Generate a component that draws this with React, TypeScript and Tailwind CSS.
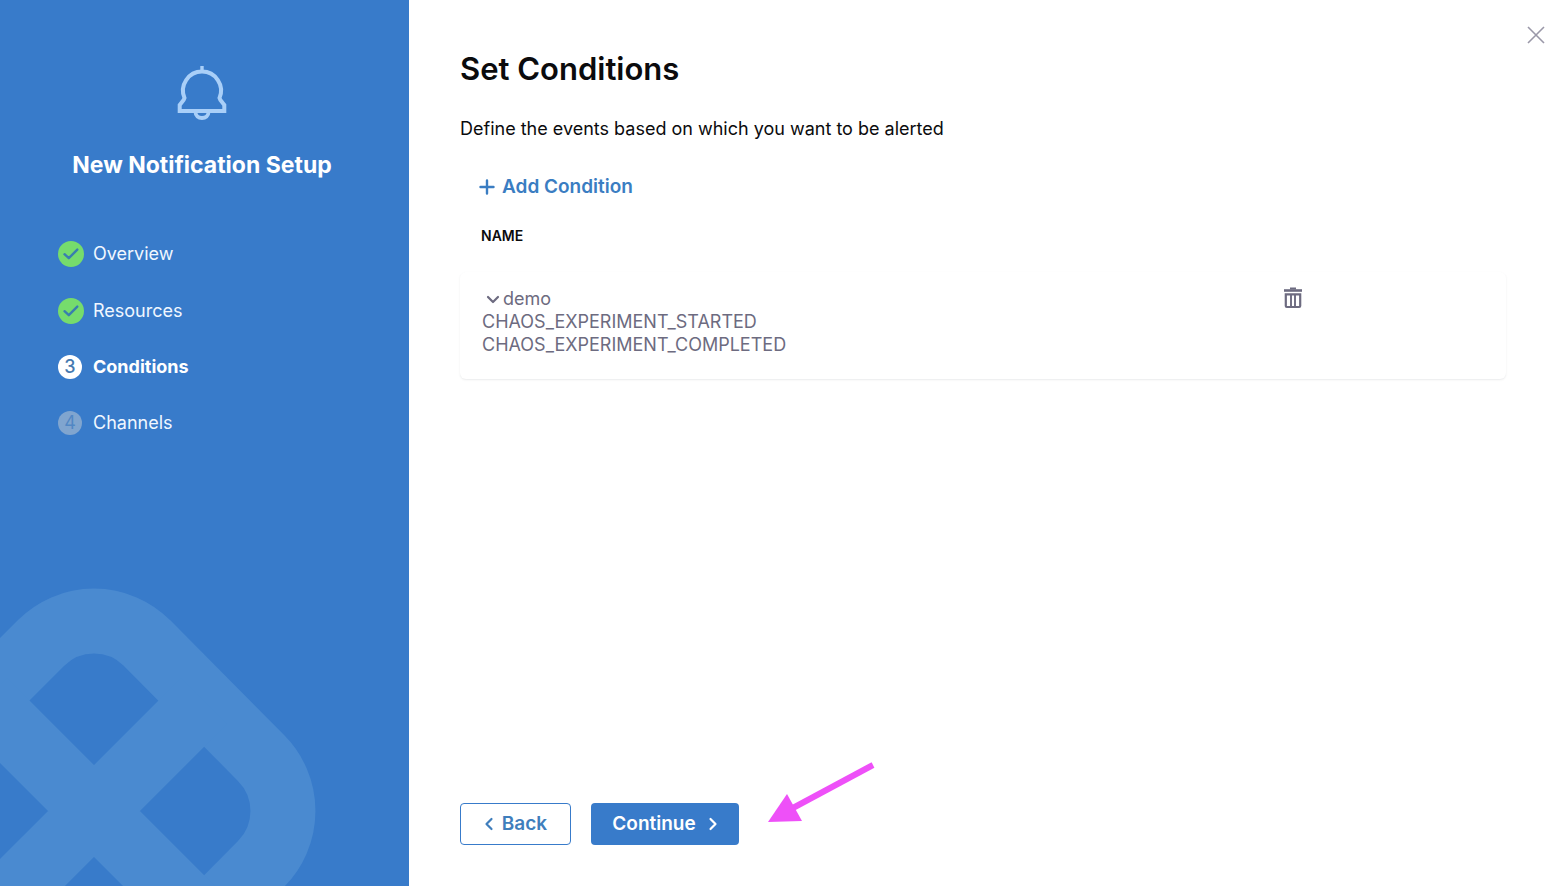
import React from "react";

type Step = { label: string; state: "done" | "current" | "pending" };

const steps: Step[] = [
  { label: "Overview", state: "done" },
  { label: "Resources", state: "done" },
  { label: "Conditions", state: "current" },
  { label: "Channels", state: "pending" },
];

const events = ["CHAOS_EXPERIMENT_STARTED", "CHAOS_EXPERIMENT_COMPLETED"];

const rowStyles = {
  done: "flex h-[29px] items-center gap-[9px] text-lg text-[#f0f7ff]",
  current: "flex h-7 items-center gap-[9px] text-lg font-bold",
  pending: "flex h-7 items-center gap-[9px] text-lg text-[#f0f7ff]",
};

function BellIcon() {
  return (
    <svg width="52" height="56" viewBox="0 0 52 56" fill="none" stroke="#a9cff8" strokeWidth="4" aria-hidden="true">
      <path d="M26 1v6" strokeWidth="3.4" />
      <path d="M8.500 33A19 19 0 1 1 43.500 33Q44 35 46 37L48.300 40V46H3.700V40L6 37Q8 35 8.500 33Z" strokeLinejoin="miter" />
      <path d="M19.500 47c0 4 3 6 6.500 6s6.500-2 6.500-6" strokeWidth="3.800" />
    </svg>
  );
}

function KnotMark() {
  return (
    <svg
      className="pointer-events-none absolute bottom-0 left-0"
      width="318"
      height="300"
      viewBox="0 586 318 300"
      fill="none"
      stroke="#4a8ad0"
      strokeWidth="65"
      aria-hidden="true"
    >
      <path d="M147 643L261 758A75 75 0 0 1 261 864L147 979A75 75 0 0 1 41 979L-74 864A75 75 0 0 1 -74 758L41 643A75 75 0 0 1 147 643Z" />
      <path d="M-16 701L204 921M204 701L-16 921" />
    </svg>
  );
}

function StepBadge({ step, index }: { step: Step; index: number }) {
  if (step.state === "done") {
    return (
      <svg width="26" height="26" viewBox="0 0 26 26" fill="none" aria-hidden="true">
        <circle cx="13" cy="13" r="13" fill="#76dc6c" />
        <path d="M6.500 13.200l4.300 4 8.500-8.600" stroke="#397eaf" strokeWidth="2.400" strokeLinecap="round" strokeLinejoin="round" />
      </svg>
    );
  }
  if (step.state === "current") {
    return (
      <span className="flex size-6 items-center justify-center rounded-full bg-white text-lg leading-6 font-medium text-[#467ab0]">
        {index}
      </span>
    );
  }
  return (
    <span className="flex size-6 items-center justify-center rounded-full bg-[#80a5cf] text-lg leading-6 text-[#5187c4]">
      {index}
    </span>
  );
}

function TrashIcon() {
  return (
    <svg width="20" height="22" viewBox="0 0 20 22" fill="none" stroke="#6d6b80" aria-hidden="true">
      <path d="M7 1.500h6" strokeWidth="2" />
      <path d="M1 3.500h18" strokeWidth="2.600" />
      <path d="M2.800 7.300h14.400V19a1 1 0 0 1-1 1H3.800a1 1 0 0 1-1-1Z" strokeWidth="2.200" />
      <path d="M8 8v11M12 8v11" strokeWidth="1.900" />
    </svg>
  );
}

export default function App() {
  return (
    <div className="flex min-h-screen bg-white font-['Inter',sans-serif] text-[#0b0b0d]">
      <aside className="relative w-[409px] shrink-0 overflow-hidden bg-[#387bca] text-white">
        <KnotMark />
        <div className="relative flex flex-col items-center pt-[65px] pr-[5px]">
          <BellIcon />
          <h2 className="mt-7 text-[23px] leading-8 font-bold">New Notification Setup</h2>
        </div>
        <ol className="relative mt-[58px] flex flex-col gap-7 px-[58px]">
          {steps.map((step, i) => (
            <li key={step.label} aria-current={step.state === "current" ? "step" : undefined} className={rowStyles[step.state]}>
              <span className="w-[26px]">
                <StepBadge step={step} index={i + 1} />
              </span>
              {step.label}
            </li>
          ))}
        </ol>
      </aside>

      <main className="relative flex min-w-0 flex-1 flex-col pt-[49px] pr-[61px] pb-[41px] pl-[51px]">
        <button type="button" aria-label="Close" className="absolute top-[26px] right-[22px]">
          <svg width="18" height="18" viewBox="0 0 18 18" stroke="#9a98a8" strokeWidth="1.600" aria-hidden="true">
            <path d="M1 1l16 16M17 1L1 17" />
          </svg>
        </button>

        <h1 className="text-[31px] leading-10 font-semibold">Set Conditions</h1>
        <p className="mt-[26px] text-lg">Define the events based on which you want to be alerted</p>

        <button
          type="button"
          className="mt-[30px] ml-[19px] flex items-center gap-[7px] self-start text-[19px] leading-7 font-semibold text-[#3a7dc2]"
        >
          <svg width="16" height="16" viewBox="0 0 16 16" stroke="currentColor" strokeWidth="2.400" strokeLinecap="round" aria-hidden="true">
            <path d="M8 1.500v13M1.500 8h13" />
          </svg>
          Add Condition
        </button>

        <table className="mt-[23px] w-full table-fixed text-left">
          <thead>
            <tr>
              <th scope="col" className="pb-6 pl-[21px] text-sm leading-6 font-semibold">
                NAME
              </th>
              <td className="w-[223px]" />
            </tr>
          </thead>
          <tbody className="rounded-md text-lg leading-[23px] text-[#6d6b80] shadow-[0_1px_2px_rgba(96,97,112,0.13)]">
            <tr className="align-top">
              <td className="pt-[15px] pb-[23px] pl-[22px]">
                <button type="button" aria-expanded="true" className="flex items-center gap-[3px] pl-1">
                  <svg width="14" height="10" viewBox="0 0 14 10" fill="none" stroke="currentColor" strokeWidth="2.200" strokeLinecap="round" strokeLinejoin="round" aria-hidden="true">
                    <path d="M2 3l5 5 5-5" />
                  </svg>
                  demo
                </button>
                {events.map((event) => (
                  <div key={event}>{event}</div>
                ))}
              </td>
              <td className="pt-[15px]">
                <button type="button" aria-label="Delete condition" className="block">
                  <TrashIcon />
                </button>
              </td>
            </tr>
          </tbody>
        </table>

        <footer className="mt-auto flex gap-5">
          <button
            type="button"
            className="flex h-[42px] w-[111px] items-center justify-center gap-2 rounded border border-[#387bca] text-[19px] leading-7 font-semibold text-[#3f7ebc]"
          >
            <svg width="10" height="14" viewBox="0 0 10 14" fill="none" stroke="currentColor" strokeWidth="2.200" strokeLinecap="round" strokeLinejoin="round" aria-hidden="true">
              <path d="M7.500 2l-5 5 5 5" />
            </svg>
            Back
          </button>
          <div className="relative">
            <button
              type="button"
              className="flex h-[42px] w-[148px] items-center justify-center gap-3 rounded bg-[#387bca] text-[19px] leading-7 font-semibold text-white"
            >
              Continue
              <svg width="10" height="14" viewBox="0 0 10 14" fill="none" stroke="currentColor" strokeWidth="2.200" strokeLinecap="round" strokeLinejoin="round" aria-hidden="true">
                <path d="M2.500 2l5 5-5 5" />
              </svg>
            </button>
            <svg className="pointer-events-none absolute bottom-[23px] left-[176px]" width="108" height="62" viewBox="0 0 108 62" aria-hidden="true">
              <path d="M106 5L24 49" stroke="#ee50f8" strokeWidth="6" />
              <path d="M1 62L20 34L35 61Z" fill="#ee50f8" />
            </svg>
          </div>
        </footer>
      </main>
    </div>
  );
}
